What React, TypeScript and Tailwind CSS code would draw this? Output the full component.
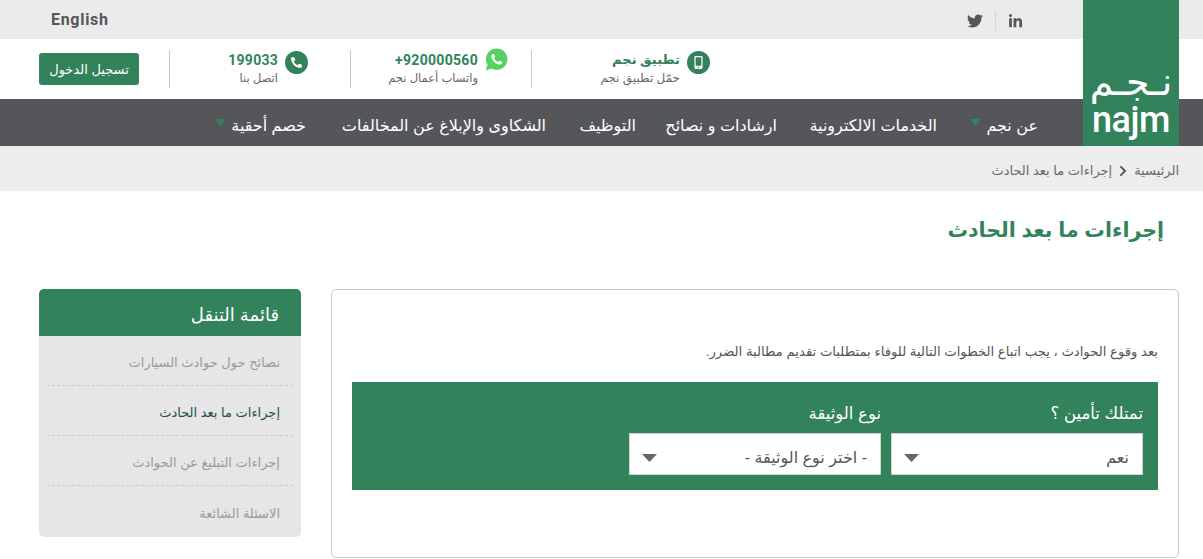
import { FaChevronRight, FaLinkedinIn, FaMobileAlt, FaPhoneAlt, FaTwitter } from "react-icons/fa";
import { IoLogoWhatsapp } from "react-icons/io";

const arabic = "font-['Liberation_Sans','DejaVu_Sans',sans-serif]";

const navItems = [
  { label: "عن نجم", width: "w-[50px]", caret: "mr-[7px]" },
  { label: "الخدمات الالكترونية", width: "w-[127px]" },
  { label: "ارشادات و نصائح", width: "w-[108px]" },
  { label: "التوظيف", width: "w-[57px]" },
  { label: "الشكاوى والإبلاغ عن المخالفات", width: "w-[207px]" },
  { label: "خصم أحقية", width: "w-[73px]", caret: "mr-[7px]" },
];

const sideItems = [
  { label: "نصائح حول حوادث السيارات", active: false },
  { label: "إجراءات ما بعد الحادث", active: true },
  { label: "إجراءات التبليغ عن الحوادث", active: false },
  { label: "الاسئلة الشائعة", active: false },
];

function Caret({ className }: { className: string }) {
  return (
    <svg width="11" height="7" viewBox="0 0 11 7" className={className}>
      <polygon points="0,0 11,0 5.5,7" fill="currentColor" />
    </svg>
  );
}

function Select({ label, value, width }: { label: string; value: string; width: string }) {
  return (
    <div className={width}>
      <div className="mb-[8px] h-[24px] text-[16.5px] leading-[24px] text-white">{label}</div>
      <div className="flex h-[42px] items-center justify-between border border-[#cfd3d1] bg-white pt-[7px] pr-[13px] pl-[12px] text-[16px] text-[#555]">
        <span>{value}</span>
        <svg width="15" height="8" viewBox="0 0 15 8" className="text-[#666]">
          <polygon points="0,0 15,0 7.5,8" fill="currentColor" />
        </svg>
      </div>
    </div>
  );
}

function Logo() {
  return (
    <div className="absolute top-0 left-[1083px] flex h-[146px] w-[96px] flex-col items-center justify-end bg-[#32825c] pb-[8px] text-white">
      <span className="mb-[2px] font-['DejaVu_Sans',sans-serif] text-[38px] leading-[36px]" dir="rtl">
        نـجـم
      </span>
      <span className="font-['Roboto',sans-serif] text-[36px] leading-[36px] font-medium tracking-[-0.5px]">
        najm
      </span>
    </div>
  );
}

export default function App() {
  return (
    <div className={`relative h-[559px] overflow-hidden bg-white ${arabic}`}>
      <Logo />

      {/* top strip */}
      <div className="flex h-[39px] items-center justify-between bg-[#ebebeb] pr-[180px] pl-[51px] text-[#55565a]">
        <span className="font-['Roboto',sans-serif] text-[16px] font-bold tracking-[0.7px]">English</span>
        <div className="flex items-center pt-[3px]">
          <FaTwitter className="text-[16px]" />
          <span className="mx-[12px] h-[20px] w-px bg-[#d5d5d5]" />
          <FaLinkedinIn className="text-[15px]" />
        </div>
      </div>

      {/* contact row */}
      <div className="flex h-[60px] items-center pl-[39px]">
        <button className="h-[32px] w-[100px] rounded-[3px] bg-[#32825c] pt-[1px] text-[13px] text-white">تسجيل الدخول</button>
        <div className="ml-[30px] h-[38px] w-px bg-[#c9c9c9]" />
        <div className="flex w-[180px] justify-end pr-[42px]" dir="ltr">
          <div className="text-right">
            <div className="font-['Roboto',sans-serif] text-[14px] leading-[18px] font-bold tracking-[0.25px] text-[#32825c]">199033</div>
            <div className="text-[11.5px] leading-[18px] text-[#666]">اتصل بنا</div>
          </div>
          <span className="ml-[7px] flex h-[23px] w-[23px] items-center justify-center rounded-full bg-[#32825c] text-white">
            <FaPhoneAlt className="text-[11px]" />
          </span>
        </div>
        <div className="h-[38px] w-px bg-[#c9c9c9]" />
        <div className="flex w-[180px] justify-end pr-[22px]" dir="ltr">
          <div className="text-right">
            <div className="font-['Roboto',sans-serif] text-[14px] leading-[18px] font-bold tracking-[0.3px] text-[#32825c]">+920000560</div>
            <div className="text-[11.5px] leading-[18px] text-[#666]">واتساب أعمال نجم</div>
          </div>
          <IoLogoWhatsapp className="-mt-[4px] ml-[6px] text-[25px] text-[#57d163]" />
        </div>
        <div className="h-[38px] w-px bg-[#c9c9c9]" />
        <div className="flex w-[178px] justify-end" dir="ltr">
          <div className="text-right">
            <div className="text-[13px] leading-[18px] font-bold text-[#32825c]">تطبيق نجم</div>
            <div className="text-[12px] leading-[18px] text-[#666]">حمّل تطبيق نجم</div>
          </div>
          <span className="ml-[7px] flex h-[23px] w-[23px] items-center justify-center rounded-full bg-[#32825c] text-white">
            <FaMobileAlt className="text-[13px]" />
          </span>
        </div>
      </div>

      {/* main nav */}
      <nav className="flex h-[47px] items-center justify-end bg-[#55565a] pt-[7px] pr-[165px] text-white" dir="ltr">
        <div className="flex items-center gap-[33px]" dir="rtl">
          {navItems.map((item) => (
            <div key={item.label} className="flex items-center whitespace-nowrap text-[16px]">
              <span className={`${item.width} text-right`}>{item.label}</span>
              {item.caret && <Caret className={`${item.caret} mb-[7px] text-[#32825c]`} />}
            </div>
          ))}
        </div>
      </nav>

      {/* breadcrumb */}
      <div className="flex h-[45px] items-center gap-[5px] bg-[#ededed] pt-[5px] pr-[24px] text-[13px] text-[#6b6b6b]" dir="rtl">
        <span>الرئيسية</span>
        <FaChevronRight className="text-[12px] text-[#55565a]" />
        <span>إجراءات ما بعد الحادث</span>
      </div>

      <h1 className="mt-[23px] pr-[39px] text-[20.5px] leading-[32px] font-bold text-[#32825c]" dir="rtl">
        إجراءات ما بعد الحادث
      </h1>

      <div className="mt-[43px] flex items-start gap-[30px] pl-[39px]">
        <aside className="w-[262px] overflow-hidden rounded-[5px] bg-[#e6e6e6]" dir="rtl">
          <div className="flex h-[47px] items-center bg-[#32825c] pt-[5px] pr-[22px] text-[18px] text-white">قائمة التنقل</div>
          <ul className="px-[8px]">
            {sideItems.map((item, idx) => (
              <li
                key={item.label}
                className={
                  "flex h-[50px] items-center pt-[5px] pr-[13px] text-[13px] " +
                  (idx < sideItems.length - 1 ? "border-b border-dashed border-[#cccccc] " : "h-[51px] ") +
                  (item.active ? "text-[#1d4f4f]" : "text-[#9a9a9a]")
                }
              >
                {item.label}
              </li>
            ))}
          </ul>
        </aside>

        <main className="h-[269px] w-[848px] rounded-[5px] border border-[#c8c8c8] px-[20px] pt-[53px]" dir="rtl">
          <p className="text-[13.2px] leading-[18px] text-[#555]">
            بعد وقوع الحوادث ، يجب اتباع الخطوات التالية للوفاء بمتطلبات تقديم مطالبة الضرر.
          </p>
          <div className="mt-[21px] flex h-[108px] gap-[10px] bg-[#32825c] px-[15px] pt-[19px]">
            <Select label="تمتلك تأمين ؟" value="نعم" width="w-[252px]" />
            <Select label="نوع الوثيقة" value="- اختر نوع الوثيقة -" width="w-[252px]" />
          </div>
        </main>
      </div>
    </div>
  );
}
